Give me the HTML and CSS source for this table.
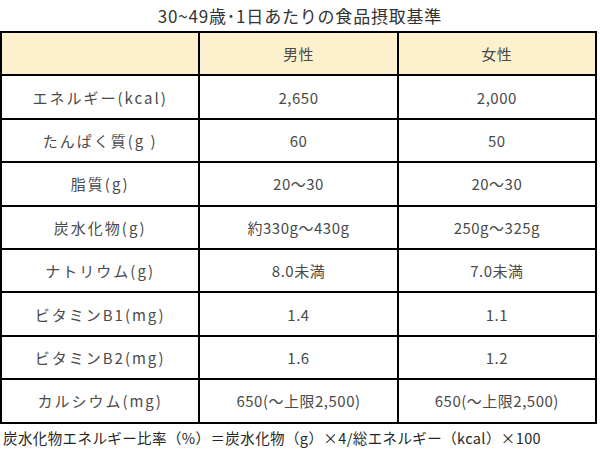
FILE: index.html
```html
<!DOCTYPE html>
<html lang="ja">
<head>
<meta charset="utf-8">
<link rel="stylesheet" href="styles.css">
</head>
<body>
<div class="page">
  <div class="title">30~49歳･1日あたりの食品摂取基準</div>
  <table class="intake">
    <thead>
      <tr><th></th><th>男性</th><th>女性</th></tr>
    </thead>
    <tbody>
      <tr><td class="label">エネルギー(kcal)</td><td>2,650</td><td>2,000</td></tr>
      <tr><td class="label">たんぱく質(g )</td><td>60</td><td>50</td></tr>
      <tr><td class="label">脂質(g)</td><td>20～30</td><td>20～30</td></tr>
      <tr><td class="label">炭水化物(g)</td><td>約330g～430g</td><td>250g～325g</td></tr>
      <tr><td class="label">ナトリウム(g)</td><td>8.0未満</td><td>7.0未満</td></tr>
      <tr><td class="label">ビタミンB1(mg)</td><td>1.4</td><td>1.1</td></tr>
      <tr><td class="label">ビタミンB2(mg)</td><td>1.6</td><td>1.2</td></tr>
      <tr><td class="label">カルシウム(mg)</td><td>650(～上限2,500)</td><td>650(～上限2,500)</td></tr>
    </tbody>
  </table>
  <div class="note">炭水化物エネルギー比率（%）＝炭水化物（g）×4/総エネルギー（kcal）×100</div>
</div>
</body>
</html>
```
FILE: styles.css
```css
html, body {
  margin: 0;
  padding: 0;
  background: #ffffff;
}
body {
  font-family: "Noto Sans CJK JP", "Noto Sans", sans-serif;
  color: #404040;
}
.page {
  width: 600px;
}
.title {
  height: 31px;
  line-height: 31px;
  text-align: center;
  font-size: 17px;
  letter-spacing: 0.8px;
  color: #333333;
}
.intake {
  border-collapse: collapse;
  width: 597px;
  table-layout: fixed;
}
.intake th,
.intake td {
  border: 2px solid #000000;
  height: 41.4px;
  padding: 0;
  text-align: center;
  font-size: 15px;
  font-weight: normal;
  letter-spacing: 0.5px;
  color: #4a4a4a;
}
.intake td.label {
  letter-spacing: 2px;
}
.intake th {
  background: #fdf0cc;
}
.note {
  padding: 3px 0 0 3px;
  font-size: 14.5px;
  letter-spacing: 0.4px;
  color: #262626;
  white-space: nowrap;
}
```
